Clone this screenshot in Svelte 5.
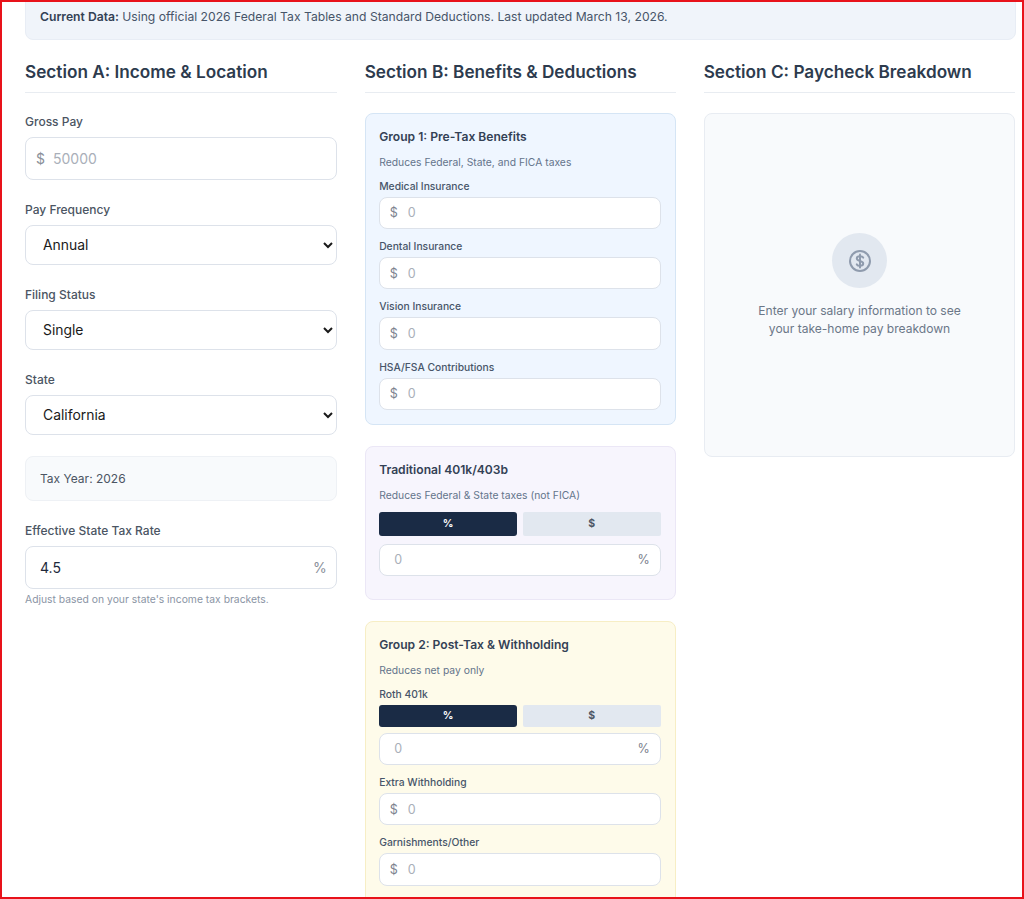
<script lang="ts">
  const pretax = ['Medical Insurance', 'Dental Insurance', 'Vision Insurance', 'HSA/FSA Contributions']
</script>

{#snippet money(label: string)}
  <div class="field">
    <label class="mini-label" for={label}>{label}</label>
    <div class="mini-input">
      <span class="unit">$</span>
      <input id={label} placeholder="0" />
    </div>
  </div>
{/snippet}

{#snippet percent(id: string)}
  <div class="toggle">
    <button class="on">%</button>
    <button>$</button>
  </div>
  <div class="mini-input pct">
    <input {id} placeholder="0" />
    <span class="unit">%</span>
  </div>
{/snippet}

{#snippet choice(label: string, option: string)}
  <div class="row">
    <label class="label" for={label}>{label}</label>
    <select id={label}>
      <option>{option}</option>
    </select>
  </div>
{/snippet}

<div class="frame">
  <div class="notice">
    <b>Current Data:</b> Using official 2026 Federal Tax Tables and Standard Deductions. Last updated March 13, 2026.
  </div>

  <div class="columns">
    <!-- Section A -->
    <section>
      <h2>Section A: Income &amp; Location</h2>

      <div class="row gross">
        <label class="label" for="gross">Gross Pay</label>
        <div class="big-input">
          <span class="unit">$</span>
          <input id="gross" placeholder="50000" />
        </div>
      </div>

      {@render choice('Pay Frequency', 'Annual')}
      {@render choice('Filing Status', 'Single')}
      {@render choice('State', 'California')}

      <div class="year">Tax Year: 2026</div>

      <div class="row">
        <label class="label" for="rate">Effective State Tax Rate</label>
        <div class="big-input">
          <input id="rate" value="4.5" />
          <span class="unit">%</span>
        </div>
        <p class="hint">Adjust based on your state's income tax brackets.</p>
      </div>
    </section>

    <!-- Section B -->
    <section>
      <h2>Section B: Benefits &amp; Deductions</h2>

      <div class="group blue">
        <h3>Group 1: Pre-Tax Benefits</h3>
        <p class="sub">Reduces Federal, State, and FICA taxes</p>
        {#each pretax as item}
          {@render money(item)}
        {/each}
      </div>

      <div class="group purple">
        <h3>Traditional 401k/403b</h3>
        <p class="sub">Reduces Federal &amp; State taxes (not FICA)</p>
        <div class="trad">
          {@render percent('trad')}
        </div>
      </div>

      <div class="group yellow">
        <h3>Group 2: Post-Tax &amp; Withholding</h3>
        <p class="sub">Reduces net pay only</p>
        <div class="field">
          <label class="mini-label roth" for="roth">Roth 401k</label>
          {@render percent('roth')}
        </div>
        {@render money('Extra Withholding')}
        {@render money('Garnishments/Other')}
      </div>
    </section>

    <!-- Section C -->
    <section>
      <h2>Section C: Paycheck Breakdown</h2>
      <div class="empty">
        <div class="circle">
          <svg width="24" height="24" viewBox="0 0 24 24" fill="none" stroke="#8f9bad" stroke-width="2" stroke-linecap="round" stroke-linejoin="round">
            <circle cx="12" cy="12" r="10" />
            <path d="M15.2 8.6C14.7 7.7 13.6 7.2 12 7.2c-1.9 0-3.2.9-3.2 2.3 0 3.2 6.4 1.8 6.4 5 0 1.4-1.3 2.3-3.2 2.3-1.6 0-2.7-.5-3.2-1.4" />
            <path d="M12 5.6v12.8" />
          </svg>
        </div>
        <p>Enter your salary information to see<br />your take-home pay breakdown</p>
      </div>
    </section>
  </div>
</div>

<style>
  :global(body) {
    margin: 0;
    background: #fff;
  }

  .frame {
    box-sizing: border-box;
    width: 1024px;
    height: 899px;
    overflow: hidden;
    border: 2px solid #e8121a;
    padding: 0 6px 0 23px;
    font-family: Inter, "Liberation Sans", sans-serif;
    color: #2d3b4e;
  }

  input, select, button {
    font-family: inherit;
  }

  /* ── Notice ── */
  .notice {
    height: 58px;
    box-sizing: border-box;
    margin-top: -20px;
    padding: 25px 14px 0;
    background: #f0f4fa;
    border: 1px solid #e8edf5;
    border-radius: 8px;
    font-size: 12.17px;
    line-height: 18px;
    color: #475569;
  }
  .notice b {
    font-weight: 600;
    color: #334155;
  }

  .columns {
    display: grid;
    grid-template-columns: 311.7px 311px 311.7px;
    gap: 28px;
    margin-top: 18px;
  }

  h2 {
    margin: 0 0 20px;
    padding-bottom: 7px;
    border-bottom: 1px solid #e8ecf1;
    font-size: 17.2px;
    line-height: 27px;
    font-weight: 600;
    color: #2d3b4e;
  }

  /* ── Section A ── */
  .row {
    margin-bottom: 22px;
  }
  .gross {
    padding-top: 1px;
  }

  .label {
    display: block;
    margin-bottom: 7px;
    font-size: 12px;
    line-height: 16px;
    font-weight: 500;
    color: #4b5563;
  }

  .big-input {
    display: flex;
    align-items: center;
    height: 43px;
    box-sizing: border-box;
    padding: 0 9px 0 10px;
    background: #fff;
    border: 1px solid #dde2ea;
    border-radius: 8px;
  }
  .big-input input {
    flex: 1;
    min-width: 0;
    padding: 0 0 0 2px;
    border: 0;
    outline: 0;
    background: none;
    font-size: 14px;
    color: #1e293b;
  }
  .big-input input:first-child {
    padding-left: 4px;
  }
  .big-input .unit {
    font-size: 14px;
    color: #8a909a;
  }
  .big-input .unit:first-child {
    margin-right: 6px;
  }
  .big-input input::placeholder,
  .mini-input input::placeholder {
    color: #a9afb9;
    opacity: 1;
  }

  select {
    display: block;
    width: 100%;
    height: 40px;
    box-sizing: border-box;
    padding: 0 8px 1px 13px;
    background: #fff;
    border: 1px solid #dde2ea;
    border-radius: 8px;
    font-size: 13.9px;
    color: #1a1a1a;
  }

  .year {
    box-sizing: border-box;
    height: 45px;
    margin: -1px 0 22px;
    padding: 0 14px;
    background: #f8fafc;
    border: 1px solid #eef1f5;
    border-radius: 8px;
    font-size: 12px;
    line-height: 43px;
    color: #4b5563;
  }

  .hint {
    margin: 3px 0 0;
    font-size: 10.35px;
    line-height: 14px;
    color: #8b95a5;
  }

  /* ── Section B ── */
  .group {
    box-sizing: border-box;
    margin-bottom: 21px;
    padding: 14px 14px 14px 13.5px;
    border: 1px solid;
    border-radius: 8px;
  }
  .blue {
    background: #eff6ff;
    border-color: #d5e5f5;
  }
  .purple {
    background: #f7f5fd;
    border-color: #ebe7f6;
    padding-bottom: 23px;
  }
  .yellow {
    background: #fefbea;
    border-color: #f7eec5;
    padding-bottom: 30px;
  }

  h3 {
    margin: 0 0 7.5px;
    font-size: 12.1px;
    line-height: 18px;
    font-weight: 600;
    color: #334155;
  }

  .sub {
    margin: 0 0 9px;
    font-size: 10.35px;
    line-height: 16px;
    color: #64748b;
  }

  .field {
    margin-bottom: 9.85px;
  }
  .field:last-child {
    margin-bottom: 0;
  }

  .mini-label {
    display: block;
    margin-bottom: 4px;
    font-size: 10.3px;
    line-height: 14px;
    font-weight: 500;
    color: #475569;
  }

  .mini-input {
    display: flex;
    align-items: center;
    height: 32.5px;
    box-sizing: border-box;
    padding: 0 10px 0 9.5px;
    background: #fff;
    border: 1px solid #dde2ea;
    border-radius: 8px;
  }
  .mini-input input {
    flex: 1;
    min-width: 0;
    padding: 0;
    border: 0;
    outline: 0;
    background: none;
    font-size: 12.5px;
  }
  .mini-input .unit {
    font-size: 12.5px;
    color: #7b828e;
  }
  .mini-input .unit:first-child {
    margin-right: 10px;
  }
  .pct {
    padding: 0 10px 0 14px;
  }

  .trad {
    margin-top: 9px;
  }

  .toggle {
    display: grid;
    grid-template-columns: 1fr 1fr;
    gap: 6px;
    margin-bottom: 6px;
  }
  .trad .toggle {
    margin-bottom: 8px;
  }
  .toggle button {
    height: 22px;
    padding: 0;
    border: 0;
    border-radius: 2px;
    background: #e2e8f0;
    font-size: 10.5px;
    font-weight: 700;
    color: #4b5563;
  }
  .trad .toggle button {
    height: 24px;
  }
  .toggle .on {
    border-radius: 3px;
    background: #1a2b45;
    color: #fff;
  }

  /* ── Section C ── */
  .empty {
    display: flex;
    flex-direction: column;
    align-items: center;
    justify-content: center;
    box-sizing: border-box;
    height: 344px;
    background: #f8fafc;
    border: 1px solid #e8ecf2;
    border-radius: 8px;
  }
  .circle {
    display: flex;
    align-items: center;
    justify-content: center;
    width: 55px;
    height: 55px;
    margin-bottom: 14px;
    border-radius: 50%;
    background: #e2e8f0;
  }
  .empty p {
    margin: 0;
    font-size: 12.05px;
    line-height: 17.5px;
    text-align: center;
    color: #6b7788;
  }
</style>
